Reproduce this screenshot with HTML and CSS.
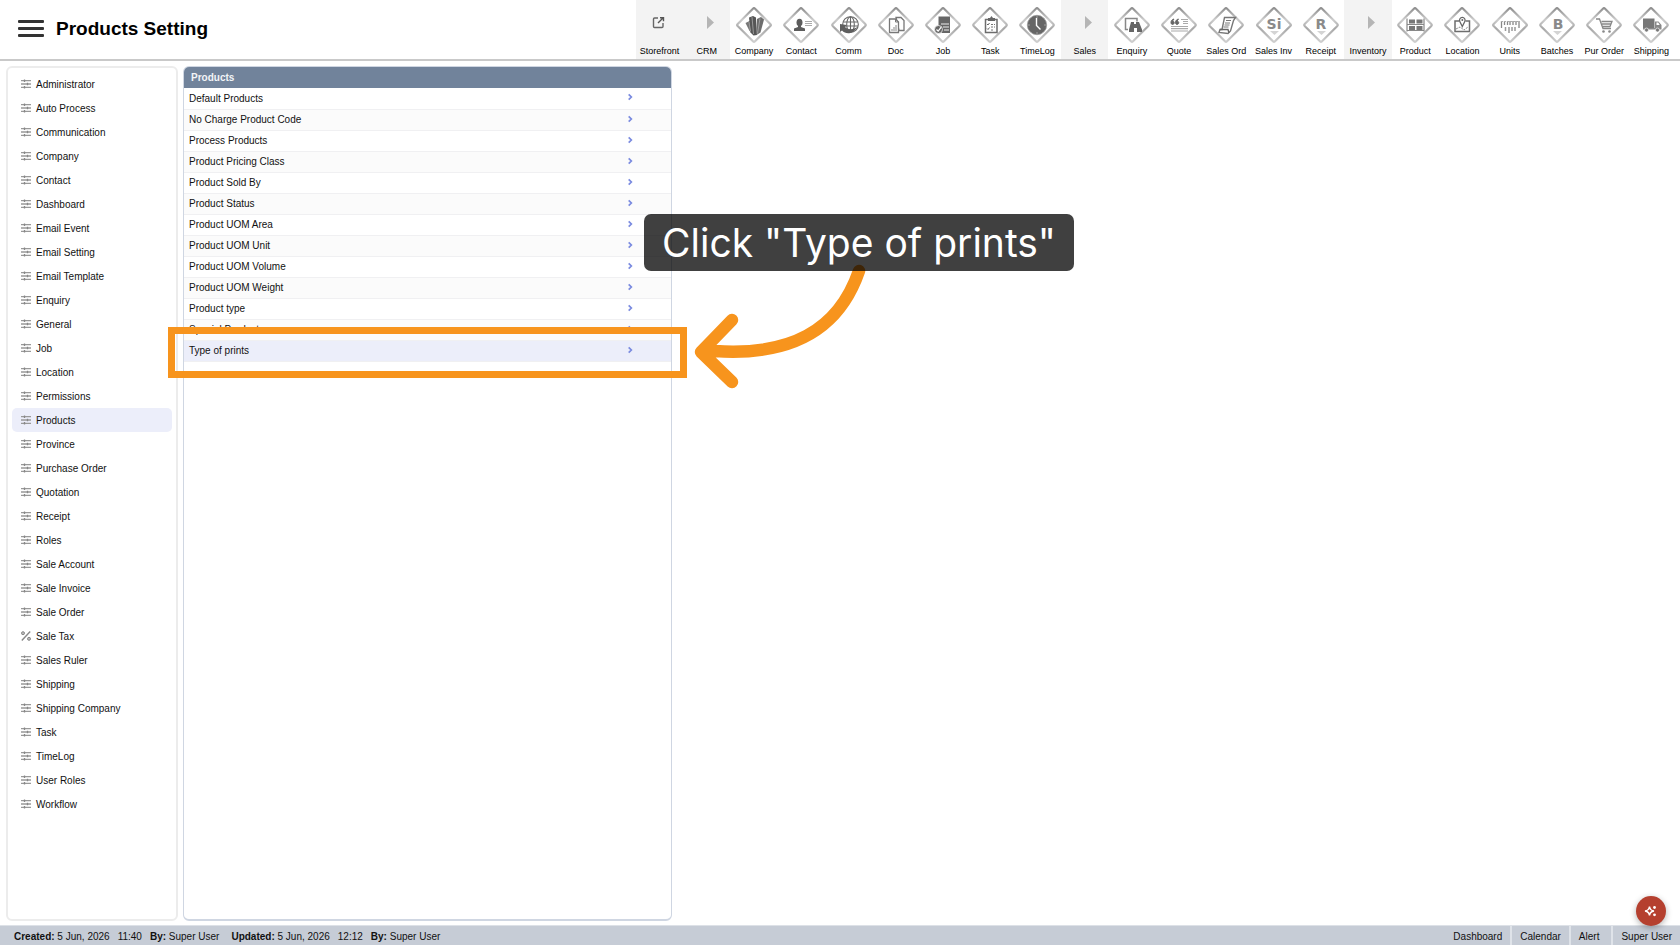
FILE: index.html
```
<!DOCTYPE html>
<html lang="en">
<head>
<meta charset="utf-8">
<title>Products Setting</title>
<link rel="stylesheet" href="styles.css">
</head>
<body>
	<svg class="defs" aria-hidden="true">
		<defs>
			<linearGradient id="edge" x1="0" y1="0" x2="1" y2="1">
				<stop offset="0" stop-color="#8c8c8c"/>
				<stop offset=".35" stop-color="#cdcdcd"/>
				<stop offset=".6" stop-color="#a8a8a8"/>
				<stop offset="1" stop-color="#d0d0d0"/>
			</linearGradient>
		</defs>
		<symbol id="diamond" viewBox="0 0 38 38">
			<rect x="6.7" y="6.7" width="24.6" height="24.6" rx="1.5" transform="rotate(45 19 19)" fill="#fff" stroke="url(#edge)" stroke-width="2.2"/>
		</symbol>
		<symbol id="sliders" viewBox="0 0 10 10">
			<path d="M0 1.7h10M0 5h10M0 8.300h10" stroke="#999" stroke-width="1.3"/>
			<path d="M3.5 .4v2.600M6.5 3.7v2.600M3.5 7v2.600" stroke="#888" stroke-width="1.3"/>
		</symbol>
		<symbol id="percent" viewBox="0 0 10 10">
			<path d="M.8 9.5 9.200.5" stroke="#888" stroke-width="1.4"/>
			<circle cx="2" cy="2.2" r="1.5" fill="#bbb" stroke="#888"/>
			<circle cx="8" cy="7.8" r="1.5" fill="#bbb" stroke="#888"/>
		</symbol>
		<symbol id="chevron" viewBox="0 0 6 6">
			<path d="M2 1l2 2-2 2" fill="none" stroke="#7b8be0" stroke-width="1.3"/>
		</symbol>
	</svg>

	<header class="topbar">
		<button class="menu" aria-label="Menu"><span></span><span></span><span></span></button>
		<h1>Products Setting</h1>
		<nav class="modules">
			<a class="group" href="#"><svg viewBox="0 0 38 38"><path d="M17 17h-3.500q-1 0-1 1v7.500q0 1 1 1H21q1 0 1-1V22" fill="none" stroke="#666" stroke-width="1.400"/><path d="M17 22l5-5M19 16.700h3.500v3.500" fill="none" stroke="#555" stroke-width="1.400"/></svg>Storefront</a>
			<a class="group" href="#"><svg viewBox="0 0 38 38"><path d="M19 15l7 6.500-7 6.500z" fill="#b5b5b5"/></svg>CRM</a>
			<a href="#"><svg viewBox="0 0 38 38"><use href="#diamond"/><path d="M10.500 17l4-2 3 2.500v9l-3-1.500z" fill="#777"/><path d="M14 11.500l4-1.500 3 1.500 1 17.500-3.500.5-3-3z" fill="#555"/><path d="M22 13l4-2 3 2.500-3.500 13-4 2.500z" fill="#6d6d6d"/><path d="M17 11l1.500 17M25 12.500l-2.500 15M14 16l1.500 9" stroke="#aaa" stroke-width=".8"/></svg>Company</a>
			<a href="#"><svg viewBox="0 0 38 38"><use href="#diamond"/><ellipse cx="17.500" cy="16.500" rx="3" ry="3.800" fill="#5c5c5c"/><path d="M16 19h3v2l4 1.500v2.500H12v-2.500l4-1.500z" fill="#5c5c5c"/><path d="M23 15.500h7M23 17.500h7M23 19.500h7" stroke="#aaa"/></svg>Contact</a>
			<a href="#"><svg viewBox="0 0 38 38"><use href="#diamond"/><g fill="none" stroke="#666" stroke-width="1.100"><circle cx="20.500" cy="18.500" r="7.800"/><ellipse cx="20.500" cy="18.500" rx="3.800" ry="7.800"/><path d="M13 16h15M13 20h15M20.500 11v15"/></g><path d="M10 18l6.500 1-1.500 2c3 3 8 3 12 0-3 7-11 8-15 3.500l-2 1.500z" fill="#5e5e5e"/></svg>Comm</a>
			<a href="#"><svg viewBox="0 0 38 38"><use href="#diamond"/><g fill="#fff" stroke="#777" stroke-width="1.300"><path d="M19 11.500h5l3 3v10h-5z"/><path d="M12.500 13h6l3 3v10.500h-9z"/></g><path d="M18.500 13v3h3" fill="none" stroke="#777"/><path d="M15 25v-2M17 25v-4M19 25v-6" stroke="#888"/></svg>Doc</a>
			<a href="#"><svg viewBox="0 0 38 38"><use href="#diamond"/><path d="M14.500 10.500H26v16.500H14.500z" fill="#666"/><path d="M17 18h8M19 21h6M20 24h5" stroke="#eee"/><circle cx="14.500" cy="23.500" r="4" fill="#666" stroke="#fff" stroke-width=".7"/><path d="M12.500 23.500l1.700 1.700 3-4" fill="none" stroke="#fff" stroke-width="1.200"/></svg>Job</a>
			<a href="#"><svg viewBox="0 0 38 38"><use href="#diamond"/><path d="M14.500 13.500h11.500v13H14.500z" fill="#fff" stroke="#6d6d6d" stroke-width="1.500"/><path d="M17 12h2l1.500-2 1.500 2h2v3h-7z" fill="#666"/><path d="M16 18l1 1 1.500-2M16 22.500l1 1 1.500-2" fill="none" stroke="#666"/><path d="M20 18.500h4M20 21h4M20 24h3" stroke="#777" stroke-dasharray="2 1"/></svg>Task</a>
			<a href="#"><svg viewBox="0 0 38 38"><use href="#diamond"/><circle cx="19" cy="19" r="9.700" fill="#666" stroke="#999" stroke-width=".8"/><path d="M18.500 12v7.500l4 4" fill="none" stroke="#fff" stroke-width="1.400"/><path d="M19 10.500v1M19 26.500v1M10.500 19h1M26.500 19h1" stroke="#ddd"/></svg>TimeLog</a>
			<a class="group" href="#"><svg viewBox="0 0 38 38"><path d="M19 15l7 6.500-7 6.500z" fill="#b5b5b5"/></svg>Sales</a>
			<a href="#"><svg viewBox="0 0 38 38"><use href="#diamond"/><path d="M15 23.500h-2.500v-11h11.500v3" fill="none" stroke="#888" stroke-width="1.500"/><path d="M18 16h3v2h2v-2h3l3 7.500v2.500h-5v-4h-3v4h-5v-2.500z" fill="#666"/></svg>Enquiry</a>
			<a href="#"><svg viewBox="0 0 38 38"><use href="#diamond"/><path d="M14 13c-4 1-3.500 5.500-1.500 5.500s2.500-3.200 0-3.500zM18.500 13c-4 1-3.500 5.500-1.500 5.500s2.500-3.200 0-3.500z" fill="#666" stroke="#666"/><path d="M21 13.500h7M23 15.500h5M23 17.500h5M11 20.500h17M11 22.700h17M11 25h17" stroke="#aaa" stroke-width="1.200"/></svg>Quote</a>
			<a href="#"><svg viewBox="0 0 38 38"><use href="#diamond"/><path d="M17.500 11.500h11l-2 3-3 10.500-2.500 2.500-9-1 1-3h2z" fill="#fff" stroke="#777" stroke-width="1.400"/><path d="M13 23.500h8l1 3.500" fill="none" stroke="#666" stroke-width="1.400"/><path d="M19 14.500h5M18 17h5M17.500 19h5M16.500 21h5" stroke="#777"/></svg>Sales Ord</a>
			<a href="#"><svg viewBox="0 0 38 38"><use href="#diamond"/><text x="19" y="23" class="letter">Si</text><path d="M15 25h9l-4.500 4z" fill="#d4d4d4"/></svg>Sales Inv</a>
			<a href="#"><svg viewBox="0 0 38 38"><use href="#diamond"/><text x="19" y="23" class="letter">R</text><path d="M15 25h9l-4.500 4z" fill="#d4d4d4"/></svg>Receipt</a>
			<a class="group" href="#"><svg viewBox="0 0 38 38"><path d="M19 15l7 6.500-7 6.500z" fill="#b5b5b5"/></svg>Inventory</a>
			<a href="#"><svg viewBox="0 0 38 38"><use href="#diamond"/><path d="M11 12.500v13M28 12.500v13M11 18.500h17M11 24.500h17" stroke="#888" stroke-width="1.200"/><path d="M13 13.500h6v4h-6zM20.500 13.500h6v4h-6zM13 20h6v4h-6zM20.500 20h6v4h-6z" fill="#777"/></svg>Product</a>
			<a href="#"><svg viewBox="0 0 38 38"><use href="#diamond"/><path d="M16 15h-4v10.500h14.500V15h-4" fill="none" stroke="#6d6d6d" stroke-width="1.500"/><path d="M13 23l4-2 4 3 4-3" fill="none" stroke="#888" stroke-dasharray="2 1"/><path d="M19.300 20.500l-2.500-5a2.800 2.800 0 1 1 5 0z" fill="#fff" stroke="#666" stroke-width="1.300"/><circle cx="19.300" cy="14" r="1" fill="#666"/></svg>Location</a>
			<a href="#"><svg viewBox="0 0 38 38"><use href="#diamond"/><path d="M10.500 15v7M13.500 15v4M16.500 15v4M19 15v4M22 15v4M25 15v4M28 15v7" stroke="#888" stroke-width="1.300"/><path d="M14.500 21v4M18 21v6M21 21v4M24 21v4" stroke="#999" stroke-width="1.500"/><path d="M10 15.500h18.500" stroke="#aaa" stroke-dasharray="2 1"/></svg>Units</a>
			<a href="#"><svg viewBox="0 0 38 38"><use href="#diamond"/><text x="20" y="23" class="letter">B</text><path d="M15 25h9l-4.500 4z" fill="#d4d4d4"/></svg>Batches</a>
			<a href="#"><svg viewBox="0 0 38 38"><use href="#diamond"/><path d="M11 13h3.500l3.500 9.500h8M16.500 15.500H27l-2 5h-7.500M17 18h9" fill="none" stroke="#888" stroke-width="1.300"/><circle cx="18.500" cy="25.500" r="1.300" fill="#888"/><circle cx="24.500" cy="25.500" r="1.300" fill="#888"/></svg>Pur Order</a>
			<a href="#"><svg viewBox="0 0 38 38"><use href="#diamond"/><path d="M11 12.500h11.500v9.500H11z" fill="#777"/><path d="M23 15.500h3.500l3 3.500v4.500H11v-1.500h12z" fill="#888"/><path d="M24.500 16.500h1.700l1.500 2.500h-3.200z" fill="#fff"/><g fill="#777" stroke="#fff" stroke-width=".6"><circle cx="14.500" cy="24" r="2"/><circle cx="25.500" cy="24" r="2"/></g></svg>Shipping</a>
		</nav>
	</header>

	<main class="content">
		<nav class="sidebar">
			<a href="#"><svg><use href="#sliders"/></svg>Administrator</a>
			<a href="#"><svg><use href="#sliders"/></svg>Auto Process</a>
			<a href="#"><svg><use href="#sliders"/></svg>Communication</a>
			<a href="#"><svg><use href="#sliders"/></svg>Company</a>
			<a href="#"><svg><use href="#sliders"/></svg>Contact</a>
			<a href="#"><svg><use href="#sliders"/></svg>Dashboard</a>
			<a href="#"><svg><use href="#sliders"/></svg>Email Event</a>
			<a href="#"><svg><use href="#sliders"/></svg>Email Setting</a>
			<a href="#"><svg><use href="#sliders"/></svg>Email Template</a>
			<a href="#"><svg><use href="#sliders"/></svg>Enquiry</a>
			<a href="#"><svg><use href="#sliders"/></svg>General</a>
			<a href="#"><svg><use href="#sliders"/></svg>Job</a>
			<a href="#"><svg><use href="#sliders"/></svg>Location</a>
			<a href="#"><svg><use href="#sliders"/></svg>Permissions</a>
			<a class="active" href="#"><svg><use href="#sliders"/></svg>Products</a>
			<a href="#"><svg><use href="#sliders"/></svg>Province</a>
			<a href="#"><svg><use href="#sliders"/></svg>Purchase Order</a>
			<a href="#"><svg><use href="#sliders"/></svg>Quotation</a>
			<a href="#"><svg><use href="#sliders"/></svg>Receipt</a>
			<a href="#"><svg><use href="#sliders"/></svg>Roles</a>
			<a href="#"><svg><use href="#sliders"/></svg>Sale Account</a>
			<a href="#"><svg><use href="#sliders"/></svg>Sale Invoice</a>
			<a href="#"><svg><use href="#sliders"/></svg>Sale Order</a>
			<a href="#"><svg><use href="#percent"/></svg>Sale Tax</a>
			<a href="#"><svg><use href="#sliders"/></svg>Sales Ruler</a>
			<a href="#"><svg><use href="#sliders"/></svg>Shipping</a>
			<a href="#"><svg><use href="#sliders"/></svg>Shipping Company</a>
			<a href="#"><svg><use href="#sliders"/></svg>Task</a>
			<a href="#"><svg><use href="#sliders"/></svg>TimeLog</a>
			<a href="#"><svg><use href="#sliders"/></svg>User Roles</a>
			<a href="#"><svg><use href="#sliders"/></svg>Workflow</a>
		</nav>

		<section class="panel">
			<table>
				<thead>
					<tr><th colspan="2">Products</th></tr>
				</thead>
				<tbody>
					<tr><td><a href="#">Default Products</a></td><td class="go"><svg><use href="#chevron"/></svg></td></tr>
					<tr><td><a href="#">No Charge Product Code</a></td><td class="go"><svg><use href="#chevron"/></svg></td></tr>
					<tr><td><a href="#">Process Products</a></td><td class="go"><svg><use href="#chevron"/></svg></td></tr>
					<tr><td><a href="#">Product Pricing Class</a></td><td class="go"><svg><use href="#chevron"/></svg></td></tr>
					<tr><td><a href="#">Product Sold By</a></td><td class="go"><svg><use href="#chevron"/></svg></td></tr>
					<tr><td><a href="#">Product Status</a></td><td class="go"><svg><use href="#chevron"/></svg></td></tr>
					<tr><td><a href="#">Product UOM Area</a></td><td class="go"><svg><use href="#chevron"/></svg></td></tr>
					<tr><td><a href="#">Product UOM Unit</a></td><td class="go"><svg><use href="#chevron"/></svg></td></tr>
					<tr><td><a href="#">Product UOM Volume</a></td><td class="go"><svg><use href="#chevron"/></svg></td></tr>
					<tr><td><a href="#">Product UOM Weight</a></td><td class="go"><svg><use href="#chevron"/></svg></td></tr>
					<tr><td><a href="#">Product type</a></td><td class="go"><svg><use href="#chevron"/></svg></td></tr>
					<tr><td><a href="#">Special Products</a></td><td class="go"><svg><use href="#chevron"/></svg></td></tr>
					<tr class="active"><td><a href="#">Type of prints</a></td><td class="go"><svg><use href="#chevron"/></svg></td></tr>
				</tbody>
			</table>
		</section>
	</main>

	<footer class="statusbar">
		<div class="record">
			<span><b>Created:</b> 5 Jun, 2026</span>
			<span>11:40</span>
			<span><b>By:</b> Super User</span>
			<span class="updated"><b>Updated:</b> 5 Jun, 2026</span>
			<span>12:12</span>
			<span><b>By:</b> Super User</span>
		</div>
		<nav class="shortcuts">
			<a href="#">Dashboard</a>
			<a href="#">Calendar</a>
			<a class="alert" href="#">Alert</a>
			<a href="#">Super User</a>
		</nav>
	</footer>

	<button class="assistant" aria-label="Assistant">
		<svg viewBox="0 0 14 14"><path d="M5.500 2.500Q6 6.500 10 7 6 7.500 5.500 11.500 5 7.500 1 7 5 6.500 5.500 2.500z" fill="none" stroke="#fff" stroke-width="1.500"/><circle cx="10.500" cy="3.500" r="1.400" fill="#fff"/><circle cx="10.500" cy="10.800" r="1.400" fill="#fff"/></svg>
	</button>

	<!-- walkthrough step -->
	<div class="highlight"></div>
	<svg class="arrow" viewBox="0 0 180 130"><path d="M168 12C147 73 98 97 24 92M41 61 10 93l31 30" fill="none" stroke="#f7941d" stroke-width="12.500" stroke-linecap="round" stroke-linejoin="round"/></svg>
	<div class="callout">Click "Type of prints"</div>
</body>
</html>
```
FILE: styles.css
```
* {
  margin: 0;
  padding: 0;
  box-sizing: border-box;
}

body {
  display: flex;
  flex-direction: column;
  min-height: 100vh;
  font-family: "Liberation Sans", Arial, sans-serif;
  font-size: 10px;
  color: #111;
  background: #fff;
}

a {
  color: inherit;
  text-decoration: none;
}

button {
  border: none;
  background: none;
  cursor: pointer;
}

.defs {
  position: absolute;
  width: 0;
  height: 0;
}

.topbar {
  display: flex;
  align-items: center;
  height: 61px;
  padding: 0 5px 0 18px;
  border-bottom: 2px solid #c9c9c9;
}

.menu {
  display: flex;
  flex-direction: column;
  gap: 4px;
  width: 26px;
  margin-right: 12px;
  margin-bottom: 2px;
}

.menu span {
  height: 3px;
  border-radius: 1px;
  background: #333;
}

h1 {
  margin-bottom: 2px;
  font-size: 19px;
  color: #000;
}

.modules {
  display: grid;
  grid-template-columns: repeat(22, 1fr);
  width: 1039px;
  height: 100%;
  margin-left: auto;
}

.modules a {
  display: flex;
  flex-direction: column;
  align-items: center;
  padding-top: 6px;
  font-size: 9px;
  line-height: 14px;
  white-space: nowrap;
  color: #000;
}

.modules .group {
  background: #f3f3f3;
}

.modules .group svg {
  margin-top: -5px;
  margin-bottom: 5px;
}

.modules svg {
  width: 38px;
  height: 38px;
}

.letter {
  font-family: "DejaVu Sans", sans-serif;
  font-size: 14px;
  font-weight: bold;
  text-anchor: middle;
  fill: #8a8a8a;
}

.content {
  display: flex;
  flex: 1;
  gap: 5px;
  padding: 5px 6px 4px;
}

.sidebar {
  width: 172px;
  padding: 4px;
  border: 2px solid #ececec;
  border-radius: 6px;
}

.sidebar a {
  display: flex;
  align-items: center;
  gap: 5px;
  height: 24px;
  padding-left: 9px;
  border-radius: 5px;
}

.sidebar svg {
  width: 10px;
  height: 10px;
}

.sidebar .active {
  background: #eceefa;
}

.panel {
  width: 489px;
  border: 1px solid #cfd6e2;
  border-bottom-width: 2px;
  border-radius: 6px;
  overflow: hidden;
}

table {
  width: 100%;
  border-collapse: collapse;
}

th {
  height: 21px;
  padding-left: 7px;
  text-align: left;
  color: #f2f4f7;
  background: #71839b;
}

td {
  height: 21px;
  padding-left: 5px;
  border-bottom: 1px solid #f0f0f2;
}

tbody tr:nth-child(even) {
  background: #fbfbfb;
}

tbody .active {
  background: #eceefa;
}

.go {
  width: 50px;
}

.go svg {
  display: block;
  width: 8px;
  height: 8px;
  margin-bottom: 2px;
}

.statusbar {
  display: flex;
  justify-content: space-between;
  height: 20px;
  padding-left: 14px;
  border-top: 1px solid #dde1e7;
  line-height: 21px;
  background: #c6ccd6;
  color: #111;
}

.record {
  display: flex;
  gap: 8px;
}

.updated {
  margin-left: 4px;
}

.shortcuts {
  display: flex;
}

.shortcuts a {
  padding: 0 8px;
}

.shortcuts a + a {
  border-left: 2px solid #dfe3e9;
}

.shortcuts .alert {
  padding-right: 12px;
}

.assistant {
  position: fixed;
  right: 14px;
  bottom: 19px;
  display: flex;
  align-items: center;
  justify-content: center;
  width: 30px;
  height: 30px;
  border-radius: 50%;
  background: #b5402f;
  box-shadow: 0 2px 6px rgba(0, 0, 0, .3);
}

.assistant svg {
  width: 14px;
  height: 14px;
}

/* walkthrough overlay */
.highlight {
  position: absolute;
  left: 168px;
  top: 327px;
  width: 519px;
  height: 51px;
  border: 7px solid #f7941d;
}

.arrow {
  position: absolute;
  left: 691px;
  top: 259px;
  width: 180px;
  height: 130px;
}

.callout {
  position: absolute;
  left: 644px;
  top: 214px;
  padding: 0 18px;
  border-radius: 7px;
  font-family: Inter, sans-serif;
  font-size: 39px;
  line-height: 57px;
  white-space: nowrap;
  color: #fff;
  background: rgba(0, 0, 0, .75);
}
```
